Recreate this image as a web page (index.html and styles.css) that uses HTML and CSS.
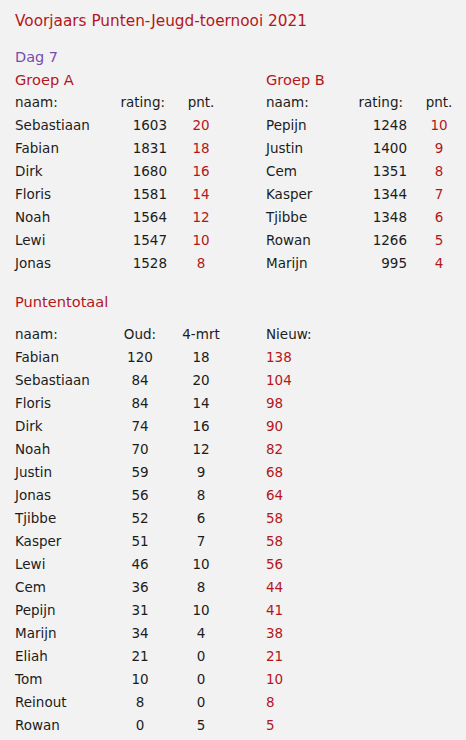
FILE: index.html
```html
<!DOCTYPE html>
<html lang="nl">
<head>
<meta charset="utf-8">
<title>Voorjaars Punten-Jeugd-toernooi 2021</title>
<link rel="stylesheet" href="styles.css">
</head>
<body>
<h1 class="title">Voorjaars Punten-Jeugd-toernooi 2021</h1>
<div class="dag">Dag 7</div>
<div class="groups">
  <section class="group group-a">
    <h2 class="subhead">Groep A</h2>
    <div class="grow head"><span>naam:</span><span class="rt hrt">rating:</span><span class="pt hpt">pnt.</span></div>
    <div class="grow"><span>Sebastiaan</span><span class="rt">1603</span><span class="pt">20</span></div>
    <div class="grow"><span>Fabian</span><span class="rt">1831</span><span class="pt">18</span></div>
    <div class="grow"><span>Dirk</span><span class="rt">1680</span><span class="pt">16</span></div>
    <div class="grow"><span>Floris</span><span class="rt">1581</span><span class="pt">14</span></div>
    <div class="grow"><span>Noah</span><span class="rt">1564</span><span class="pt">12</span></div>
    <div class="grow"><span>Lewi</span><span class="rt">1547</span><span class="pt">10</span></div>
    <div class="grow"><span>Jonas</span><span class="rt">1528</span><span class="pt">8</span></div>
  </section>
  <section class="group group-b">
    <h2 class="subhead">Groep B</h2>
    <div class="grow head"><span>naam:</span><span class="rt hrt">rating:</span><span class="pt hpt">pnt.</span></div>
    <div class="grow"><span>Pepijn</span><span class="rt">1248</span><span class="pt">10</span></div>
    <div class="grow"><span>Justin</span><span class="rt">1400</span><span class="pt">9</span></div>
    <div class="grow"><span>Cem</span><span class="rt">1351</span><span class="pt">8</span></div>
    <div class="grow"><span>Kasper</span><span class="rt">1344</span><span class="pt">7</span></div>
    <div class="grow"><span>Tjibbe</span><span class="rt">1348</span><span class="pt">6</span></div>
    <div class="grow"><span>Rowan</span><span class="rt">1266</span><span class="pt">5</span></div>
    <div class="grow"><span>Marijn</span><span class="rt">995</span><span class="pt">4</span></div>
  </section>
</div>
<h2 class="subhead total-title">Puntentotaal</h2>
<div class="totals">
  <div class="trow head"><span>naam:</span><span class="c">Oud:</span><span class="c">4-mrt</span><span class="nw-h">Nieuw:</span></div>
  <div class="trow"><span>Fabian</span><span class="c">120</span><span class="c">18</span><span class="nw">138</span></div>
  <div class="trow"><span>Sebastiaan</span><span class="c">84</span><span class="c">20</span><span class="nw">104</span></div>
  <div class="trow"><span>Floris</span><span class="c">84</span><span class="c">14</span><span class="nw">98</span></div>
  <div class="trow"><span>Dirk</span><span class="c">74</span><span class="c">16</span><span class="nw">90</span></div>
  <div class="trow"><span>Noah</span><span class="c">70</span><span class="c">12</span><span class="nw">82</span></div>
  <div class="trow"><span>Justin</span><span class="c">59</span><span class="c">9</span><span class="nw">68</span></div>
  <div class="trow"><span>Jonas</span><span class="c">56</span><span class="c">8</span><span class="nw">64</span></div>
  <div class="trow"><span>Tjibbe</span><span class="c">52</span><span class="c">6</span><span class="nw">58</span></div>
  <div class="trow"><span>Kasper</span><span class="c">51</span><span class="c">7</span><span class="nw">58</span></div>
  <div class="trow"><span>Lewi</span><span class="c">46</span><span class="c">10</span><span class="nw">56</span></div>
  <div class="trow"><span>Cem</span><span class="c">36</span><span class="c">8</span><span class="nw">44</span></div>
  <div class="trow"><span>Pepijn</span><span class="c">31</span><span class="c">10</span><span class="nw">41</span></div>
  <div class="trow"><span>Marijn</span><span class="c">34</span><span class="c">4</span><span class="nw">38</span></div>
  <div class="trow"><span>Eliah</span><span class="c">21</span><span class="c">0</span><span class="nw">21</span></div>
  <div class="trow"><span>Tom</span><span class="c">10</span><span class="c">0</span><span class="nw">10</span></div>
  <div class="trow"><span>Reinout</span><span class="c">8</span><span class="c">0</span><span class="nw">8</span></div>
  <div class="trow"><span>Rowan</span><span class="c">0</span><span class="c">5</span><span class="nw">5</span></div>
</div>
</body>
</html>
```

FILE: styles.css
```css
html, body {
  margin: 0;
  background: #f2f2f2;
}
body {
  padding: 10px 0 0 15px;
  font-family: "DejaVu Sans", Verdana, sans-serif;
  font-size: 13.5px;
  line-height: 23px;
  color: #1c1c1c;
}
.title {
  margin: 0 0 13px 0;
  font-size: 15.3px;
  font-weight: normal;
  line-height: 23px;
  color: #b4161c;
}
.dag {
  color: #7a4dab;
  font-size: 14.5px;
  line-height: 22px;
}
.subhead {
  margin: 0;
  font-size: 14.6px;
  font-weight: normal;
  line-height: 23px;
  color: #b4161c;
}
.groups {
  display: grid;
  grid-template-columns: 251px auto;
}
.grow {
  display: grid;
}
.group-a .grow { grid-template-columns: 98px 54px 68px; }
.group-b .grow { grid-template-columns: 87px 54px 64px; }
.rt { text-align: right; }
.pt { text-align: center; color: #b4161c; }
.head .hpt { color: inherit; }
.group-a .head .hrt { padding-right: 2px; }
.group-b .head .hrt { padding-right: 4px; }
.total-title { margin: 15px 0 10px 0; }
.trow {
  display: grid;
  grid-template-columns: 100px 50px 72px 1fr;
}
.trow .c { text-align: center; }
.trow .nw { color: #b4161c; padding-left: 29px; }
.trow .nw-h { padding-left: 29px; }
```
